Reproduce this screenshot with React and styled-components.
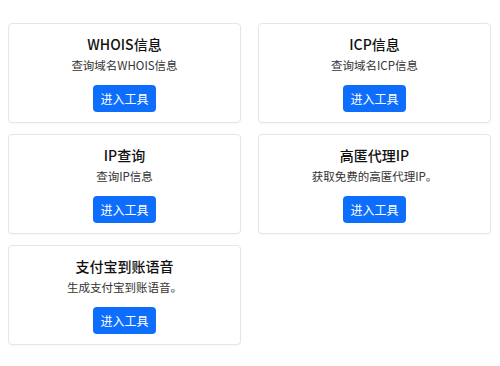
import React from 'react';
import styled, {createGlobalStyle} from 'styled-components';

const tools = [
  {title: 'WHOIS信息', desc: '查询域名WHOIS信息'},
  {title: 'ICP信息', desc: '查询域名ICP信息'},
  {title: 'IP查询', desc: '查询IP信息'},
  {title: '高匿代理IP', desc: '获取免费的高匿代理IP。'},
  {title: '支付宝到账语音', desc: '生成支付宝到账语音。'},
];

const App = () => (
  <>
    <GlobalStyle />
    <Grid>
      {tools.map((tool) => (
        <Card key={tool.title}>
          <Title>{tool.title}</Title>
          <Desc>{tool.desc}</Desc>
          <ToolButton>进入工具</ToolButton>
        </Card>
      ))}
    </Grid>
  </>
);

const GlobalStyle = createGlobalStyle`
  body {
    margin: 0;
    background: #fff;
    font-family: "Noto Sans CJK SC", "Noto Sans", sans-serif;
  }
`;

const Grid = styled.div`
  display: grid;
  grid-template-columns: 233px 233px;
  column-gap: 17px;
  row-gap: 11px;
  padding: 23px 8px;
`;

const Card = styled.div`
  height: 100px;
  box-sizing: border-box;
  border: 1px solid #e6e6e6;
  border-radius: 4px;
  box-shadow: 0 1px 2px rgba(0, 0, 0, 0.04);
  background: #fff;

  display: flex;
  flex-direction: column;
  align-items: center;
  padding-top: 10px;
`;

const Title = styled.h3`
  margin: 0;
  font-size: 14px;
  font-weight: 500;
  line-height: 21px;
  color: #111;
`;

const Desc = styled.p`
  margin: 1px 0 0;
  font-size: 11.5px;
  line-height: 18px;
  color: #333;
`;

const ToolButton = styled.button`
  margin-top: 11px;
  width: 63px;
  height: 27px;
  padding: 0;
  border: none;
  border-radius: 4px;
  background: #0d6efd;
  color: #fff;
  font-family: inherit;
  font-size: 12px;
  cursor: pointer;
`;

export default App;
